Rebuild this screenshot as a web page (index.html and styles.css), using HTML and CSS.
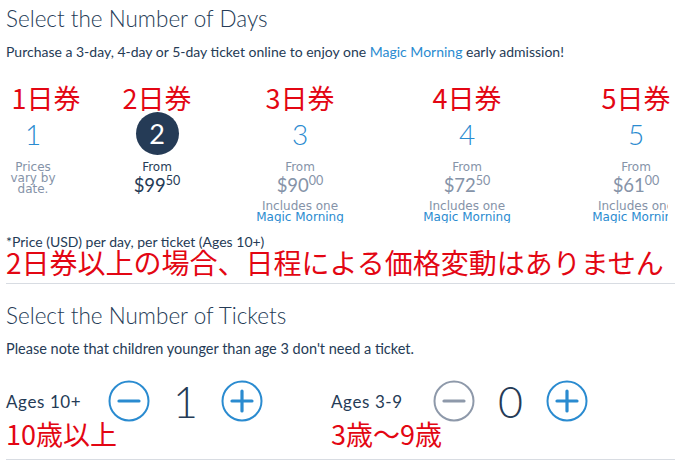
FILE: index.html
```html
<!DOCTYPE html>
<html lang="en">
<head>
<meta charset="utf-8">
<title>Tickets</title>
<link rel="stylesheet" href="styles.css">
</head>
<body>
<main class="page">
  <section class="days">
    <h2 class="title">Select the Number of Days</h2>
    <p class="lead">Purchase a 3-day, 4-day or 5-day ticket online to enjoy one <span class="link">Magic Morning</span> early admission!</p>

    <div class="notes">
      <div class="col"><span class="jp">1日券</span></div>
      <div class="col"><span class="jp">2日券</span></div>
      <div class="col"><span class="jp">3日券</span></div>
      <div class="col"><span class="jp">4日券</span></div>
      <div class="col"><span class="jp">5日券</span></div>
    </div>

    <div class="clip">
      <div class="cols options">
        <div class="col">
          <div class="num">1</div>
          <div class="info muted">Prices<br>vary by<br>date.</div>
        </div>
        <div class="col">
          <div class="num"><span class="sel">2</span></div>
          <div class="info">
            <div class="from">From</div>
            <div class="price">$99<sup>50</sup></div>
          </div>
        </div>
        <div class="col">
          <div class="num">3</div>
          <div class="info muted">
            <div class="from">From</div>
            <div class="price">$90<sup>00</sup></div>
            <div class="incl">Includes one<br><span class="link">Magic Morning</span></div>
          </div>
        </div>
        <div class="col">
          <div class="num">4</div>
          <div class="info muted">
            <div class="from">From</div>
            <div class="price">$72<sup>50</sup></div>
            <div class="incl">Includes one<br><span class="link">Magic Morning</span></div>
          </div>
        </div>
        <div class="col">
          <div class="num">5</div>
          <div class="info muted">
            <div class="from">From</div>
            <div class="price">$61<sup>00</sup></div>
            <div class="incl">Includes one<br><span class="link">Magic Morning</span></div>
          </div>
        </div>
      </div>
    </div>

    <p class="fine">*Price (USD) per day, per ticket (Ages 10+)</p>
    <p class="jp big">2日券以上の場合、日程による価格変動はありません</p>
  </section>

  <hr class="rule">

  <section class="tickets">
    <h2 class="title t2">Select the Number of Tickets</h2>
    <p class="lead lead2">Please note that children younger than age 3 don't need a ticket.</p>

    <div class="groups">
      <div class="group">
        <div class="row">
          <span class="label">Ages 10+</span>
          <svg class="btn" width="42" height="42" viewBox="0 0 42 42"><circle cx="21" cy="21" r="19.5" fill="none" stroke="#2a8bd0" stroke-width="2"/><line x1="11" y1="21" x2="31" y2="21" stroke="#2a8bd0" stroke-width="3.2" stroke-linecap="round"/></svg>
          <span class="count">1</span>
          <svg class="btn" width="42" height="42" viewBox="0 0 42 42"><circle cx="21" cy="21" r="19.5" fill="none" stroke="#2a8bd0" stroke-width="2"/><line x1="11" y1="21" x2="31" y2="21" stroke="#2a8bd0" stroke-width="3.2" stroke-linecap="round"/><line x1="21" y1="11" x2="21" y2="31" stroke="#2a8bd0" stroke-width="3.2" stroke-linecap="round"/></svg>
        </div>
        <p class="jp note">10歳以上</p>
      </div>
      <div class="group">
        <div class="row">
          <span class="label">Ages 3-9</span>
          <svg class="btn" width="42" height="42" viewBox="0 0 42 42"><circle cx="21" cy="21" r="19.5" fill="none" stroke="#8e99aa" stroke-width="2"/><line x1="11" y1="21" x2="31" y2="21" stroke="#8e99aa" stroke-width="3.2" stroke-linecap="round"/></svg>
          <span class="count">0</span>
          <svg class="btn" width="42" height="42" viewBox="0 0 42 42"><circle cx="21" cy="21" r="19.5" fill="none" stroke="#2a8bd0" stroke-width="2"/><line x1="11" y1="21" x2="31" y2="21" stroke="#2a8bd0" stroke-width="3.2" stroke-linecap="round"/><line x1="21" y1="11" x2="21" y2="31" stroke="#2a8bd0" stroke-width="3.2" stroke-linecap="round"/></svg>
        </div>
        <p class="jp note">3歳〜9歳</p>
      </div>
    </div>
  </section>

  <hr class="rule r2">
</main>
</body>
</html>
```

FILE: styles.css
```css
html, body {
  margin: 0;
  padding: 0;
  background: #ffffff;
  overflow: hidden;
}

.page {
  width: 681px;
  box-sizing: border-box;
  padding: 0 6px;
  font-family: Lato, "Noto Sans", sans-serif;
  color: #253b56;
}

.title {
  margin: 0;
  padding-top: 6px;
  font-size: 22.5px;
  line-height: 26px;
  font-weight: 300;
  color: #253b56;
}

.lead {
  margin: 11px 0 0;
  font-size: 14px;
  line-height: 18px;
  color: #253b56;
}

.lead2 {
  font-size: 14.5px;
}

.link {
  color: #2a8bd0;
}

.jp {
  font-family: "Noto Sans CJK JP", sans-serif;
  color: #e30613;
  font-size: 27px;
  line-height: 29px;
  white-space: nowrap;
}

.cols {
  display: grid;
  grid-template-columns: 54px 194px 92px 242px 96px;
}

.notes {
  margin-top: 22px;
  display: grid;
  grid-template-columns: 80px 142px 144px 190px 148px;
}

.col {
  display: flex;
  flex-direction: column;
  align-items: center;
}

.clip {
  width: 662px;
  overflow: hidden;
}

.num {
  height: 43px;
  display: flex;
  align-items: center;
  justify-content: center;
  font-size: 28px;
  font-weight: 300;
  color: #2a8bd0;
}

.sel {
  width: 43px;
  height: 43px;
  border-radius: 50%;
  background: #253b56;
  color: #ffffff;
  display: flex;
  align-items: center;
  justify-content: center;
  font-size: 27px;
  font-weight: 400;
}

.info {
  margin-top: 7px;
  font-family: "DejaVu Sans", Verdana, sans-serif;
  font-size: 12px;
  line-height: 11px;
  text-align: center;
  white-space: nowrap;
  color: #253b56;
  display: flex;
  flex-direction: column;
  align-items: center;
}

.info.muted {
  color: #8593a8;
}

.price {
  font-family: Lato, sans-serif;
  font-size: 18.5px;
  line-height: 24px;
}

.price sup {
  font-size: 12.5px;
  line-height: 0;
  vertical-align: 7px;
}

.incl {
  margin-top: 4px;
}

.fine {
  margin: 12px 0 0;
  font-size: 14px;
  line-height: 14px;
  color: #253b56;
}

.big {
  margin: -2px 0 0;
  font-size: 28px;
  line-height: 30px;
}

.rule {
  margin: 6px 0 0;
  border: 0;
  border-top: 1px solid #d8dce2;
}

.t2 {
  margin-top: 19px;
  padding-top: 0;
}

.groups {
  margin-top: 22px;
  display: grid;
  grid-template-columns: 325px 1fr;
}

.row {
  display: flex;
  align-items: center;
  height: 42px;
}

.label {
  width: 102px;
  font-size: 17px;
  letter-spacing: 0.6px;
  color: #253b56;
}

.btn {
  display: block;
  flex: none;
}

.count {
  width: 71px;
  text-align: center;
  font-size: 43px;
  font-weight: 300;
  color: #253b56;
}

.note {
  margin: -3px 0 0;
}

.r2 {
  margin-top: 11px;
}
```
